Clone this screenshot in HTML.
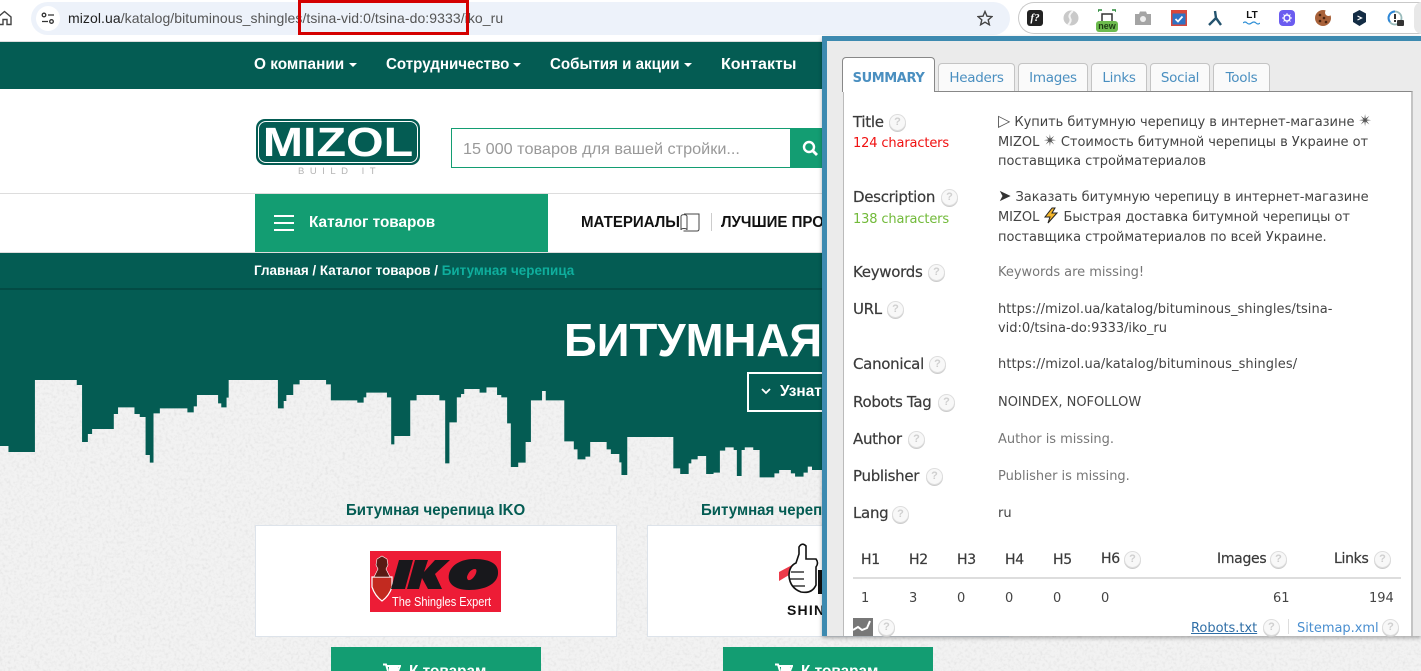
<!DOCTYPE html>
<html lang="ru"><head><meta charset="utf-8"><title>MIZOL</title>
<style>
*{box-sizing:border-box}
html,body{margin:0;padding:0;width:1421px;height:671px;overflow:hidden;background:#f2f2f2}
body{position:relative;font-family:"Liberation Sans",sans-serif}
.a{position:absolute;white-space:nowrap}
.r{position:absolute;white-space:nowrap;font-family:"Liberation Sans",sans-serif;font-weight:700;transform-origin:0 50%;transform:scaleX(.96);line-height:20px}
.p{position:absolute;white-space:nowrap;font-family:"DejaVu Sans",sans-serif;font-size:13px;line-height:20px;letter-spacing:-.03px;color:#444}
.l{font-size:15px;color:#3a3a3a;letter-spacing:-.3px;-webkit-text-stroke:.2px #3a3a3a}
.h{font-size:14px;color:#3a3a3a;letter-spacing:-.3px;-webkit-text-stroke:.2px #3a3a3a}
.m{color:#777}
.q{position:absolute;width:17px;height:17px;border-radius:50%;border:1.5px solid #dedede;background:#f8f8f8;color:#cfcfcf;font:700 11px/14px "Liberation Sans",sans-serif;text-align:center;box-shadow:0 1px 0 #ccc}
.tab{position:absolute;top:63px;height:28px;background:#fafafa;border:1px solid #c4c4c4;border-bottom:0;border-radius:4px 4px 0 0;color:#4a8fc0;font:13.5px/28px "DejaVu Sans",sans-serif;letter-spacing:-.28px;text-align:center}
.c{position:absolute;width:0;height:0;border-left:4px solid transparent;border-right:4px solid transparent;border-top:4px solid #fff;top:63px}
.st{font-size:16px;line-height:14px;color:#555}
</style></head><body>

<!-- browser bar -->
<div class="a" style="left:0;top:0;width:1421px;height:42px;background:#fff"></div>
<svg class="a" style="left:0;top:9px" width="12" height="17" viewBox="0 0 12 17"><path d="M-2 8L4.500 2.500L11 8V15.500H7V10.500H3V15.500H-2" fill="none" stroke="#444" stroke-width="1.400"/></svg>
<div class="a" style="left:31px;top:2px;width:979px;height:33px;border-radius:17px;background:#edf2fa"></div>
<div class="a" style="left:36px;top:6px;width:24px;height:25px;border-radius:50%;background:#fff"></div>
<svg class="a" style="left:41px;top:12px" width="14" height="13" viewBox="0 0 14 13"><g fill="none" stroke="#333" stroke-width="1.300"><circle cx="3" cy="3" r="1.800"/><path d="M7 3H13M1 9.500H7"/><circle cx="10.500" cy="9.500" r="1.800"/></g></svg>
<div class="a" style="left:68px;top:9px;font-size:14px;line-height:18px;color:#555;letter-spacing:.07px"><span style="color:#1f1f1f">mizol.ua</span>/katalog/bituminous_shingles/tsina-vid:0/tsina-do:9333/iko_ru</div>
<div class="a" style="left:298px;top:0;width:171px;height:35px;border:3px solid #d40000"></div>
<svg class="a" style="left:977px;top:10px" width="16" height="16" viewBox="0 0 16 16"><path d="M8 1.500L10 6.200L15 6.600L11.200 9.900L12.400 14.800L8 12.200L3.600 14.800L4.800 9.900L1 6.600L6 6.200Z" fill="none" stroke="#444" stroke-width="1.400"/></svg>
<div class="a" style="left:1018px;top:2px;width:420px;height:32px;border:1px solid #c9c9c9;border-right:0;border-radius:17px;background:#fff"></div>
<!-- extensions -->
<div class="a" style="left:1027px;top:10px;width:16px;height:16px;border-radius:3px;background:#222;color:#fff;font:italic 700 11px/16px 'Liberation Serif',serif;text-align:center">f?</div>
<svg class="a" style="left:1063px;top:10px" width="16" height="16" viewBox="0 0 16 16"><circle cx="8" cy="8" r="7.500" fill="#c9c9c9"/><path d="M10 1Q5 5 7 8T5 15" fill="none" stroke="#f4f4f4" stroke-width="2"/></svg>
<div class="a" style="left:1096px;top:21px;width:22px;height:11px;border-radius:3px;background:#6dbb4e;color:#1d3a14;font:700 9px/11px 'Liberation Sans',sans-serif;text-align:center">new</div>
<svg class="a" style="left:1098px;top:9px" width="18" height="12" viewBox="0 0 18 12"><path d="M0 3V1H4M14 1H18V3" fill="none" stroke="#2a8a3a" stroke-width="1.500"/><path d="M4 12V5H14V12" fill="none" stroke="#333" stroke-width="1.500"/></svg>
<svg class="a" style="left:1135px;top:11px" width="16" height="14" viewBox="0 0 16 14"><path d="M0 3H4L5 .5H11L12 3H16V14H0Z" fill="#a4a4a4"/><circle cx="8" cy="8" r="3" fill="#eee"/></svg>
<svg class="a" style="left:1171px;top:10px" width="16" height="16" viewBox="0 0 16 16"><rect width="16" height="16" fill="#d9473a"/><rect x="1.500" y="3.500" width="13" height="11" fill="#2f72c4"/><path d="M4.500 9L7 11.500L11.500 6.500" fill="none" stroke="#fff" stroke-width="1.800"/></svg>
<svg class="a" style="left:1208px;top:10px" width="14" height="16" viewBox="0 0 14 16"><path d="M7 1L8 8M8 8L1 15M8 8L13 15" fill="none" stroke="#24536e" stroke-width="2.400"/></svg>
<div class="a" style="left:1244px;top:10px;width:16px;font:700 10px/12px 'Liberation Sans',sans-serif;color:#111;text-align:center">LT</div>
<svg class="a" style="left:1243px;top:21px" width="17" height="4" viewBox="0 0 17 4"><path d="M0 2Q2 0 4 2T8.500 2T13 2T17 2" fill="none" stroke="#2c8ed6" stroke-width="1.200"/></svg>
<div class="a" style="left:1279px;top:10px;width:16px;height:16px;border-radius:4px;background:#6b5cf0"></div>
<svg class="a" style="left:1282px;top:13px" width="10" height="10" viewBox="0 0 10 10"><circle cx="5" cy="5" r="3" fill="none" stroke="#fff" stroke-width="1.400"/><path d="M5 0V10M0 5H10M1.500 1.500L8.500 8.500M8.500 1.500L1.500 8.500" stroke="#fff" stroke-width=".9" stroke-dasharray="1.500 7 1.500"/></svg>
<svg class="a" style="left:1315px;top:10px" width="16" height="16" viewBox="0 0 16 16"><circle cx="8" cy="8" r="8" fill="#a9623a"/><circle cx="13.500" cy="2.500" r="3.500" fill="#fff"/><circle cx="5" cy="5" r="1.300" fill="#4a2410"/><circle cx="9" cy="8" r="1.300" fill="#4a2410"/><circle cx="5" cy="11" r="1.300" fill="#4a2410"/><circle cx="11" cy="12" r="1.300" fill="#4a2410"/></svg>
<svg class="a" style="left:1353px;top:10px" width="13" height="16" viewBox="0 0 13 16"><path d="M6.500 0L13 3.500V12L6.500 16L0 12V3.500Z" fill="#132c44"/><path d="M4.500 6L8.500 8L4.500 10" fill="none" stroke="#fff" stroke-width="1.200"/></svg>
<svg class="a" style="left:1387px;top:10px" width="18" height="17" viewBox="0 0 18 17"><circle cx="8" cy="8" r="6.500" fill="none" stroke="#9bb" stroke-width="1.800"/><path d="M8 1.500A6.500 6.500 0 0 0 3 12" fill="none" stroke="#2d87d8" stroke-width="2"/><rect x="7" y="4" width="2" height="5" fill="#333"/><rect x="7" y="10" width="2" height="2" fill="#333"/><rect x="10" y="10" width="7" height="6" rx="1" fill="#333"/></svg>
<div class="a" style="left:1414px;top:2px;width:8px;height:32px;border-radius:16px 0 0 16px;background:#e8e8e8"></div>

<!-- top nav -->
<div class="a" style="left:0;top:41px;width:825px;height:48px;background:#045c53;border-top:1px solid #ddd"></div>
<div class="r" style="left:254px;top:55px;color:#fff;font-size:16px;transform:scaleX(.96)">О компании</div><div class="c" style="left:349px"></div>
<div class="r" style="left:386px;top:55px;color:#fff;font-size:16px;transform:scaleX(.945)">Сотрудничество</div><div class="c" style="left:513px"></div>
<div class="r" style="left:550px;top:55px;color:#fff;font-size:16px;transform:scaleX(.945)">События и акции</div><div class="c" style="left:684px"></div>
<div class="r" style="left:721px;top:55px;color:#fff;font-size:16px;transform:scaleX(1)">Контакты</div>

<!-- logo row -->
<div class="a" style="left:0;top:89px;width:825px;height:105px;background:#fff;border-bottom:1px solid #ddd"></div>
<div class="a" style="left:256px;top:119px;width:164px;height:46px;background:#045c53;border-radius:9px"></div>
<div class="a" style="left:258px;top:121px;width:160px;height:42px;border:1px solid #fff;border-radius:8px"></div>
<div class="a" style="left:263px;top:121px;width:150px;height:42px;font:700 41px/42px 'Liberation Sans',sans-serif;color:#fff;text-align:center;transform:scaleX(1.18)">MIZOL</div>
<div class="a" style="left:298px;top:166px;font:9.500px/12px 'Liberation Sans',sans-serif;color:#b4b4b4;letter-spacing:5.500px">BUILD IT</div>
<div class="a" style="left:451px;top:128px;width:341px;height:40px;border:1px solid #139d72;background:#fff"></div>
<div class="r" style="left:463px;top:140px;font-size:16px;font-weight:400;color:#999;transform:scaleX(1.015)">15 000 товаров для вашей стройки...</div>
<div class="a" style="left:790px;top:128px;width:35px;height:40px;background:#139d72"></div>
<svg class="a" style="left:802px;top:140px" width="18" height="17" viewBox="0 0 18 17"><circle cx="7" cy="7" r="5" fill="none" stroke="#fff" stroke-width="2.400"/><path d="M10.500 10.500L15 15" stroke="#fff" stroke-width="2.800"/></svg>

<!-- catalog row -->
<div class="a" style="left:0;top:194px;width:825px;height:59px;background:#fff"></div>
<div class="a" style="left:255px;top:194px;width:293px;height:58px;background:#139d72"></div>
<div class="a" style="left:274px;top:215px;width:20px;height:2px;background:#fff"></div>
<div class="a" style="left:274px;top:222px;width:20px;height:2px;background:#fff"></div>
<div class="a" style="left:274px;top:229px;width:20px;height:2px;background:#fff"></div>
<div class="r" style="left:309px;top:213px;color:#fff;font-size:16px;transform:scaleX(.958)">Каталог товаров</div>
<div class="r" style="left:581px;top:213px;color:#111;font-size:16px;transform:scaleX(.94)">МАТЕРИАЛЫ</div>
<svg class="a" style="left:680px;top:213px" width="21" height="20" viewBox="0 0 21 20"><path d="M1 3.500C1 1 7 1 7 3.500V17C7 15 1 15 1 17ZM4 1H19V16Q19 18 17 18H3.500" fill="none" stroke="#444" stroke-width="1"/></svg>
<div class="a" style="left:711px;top:213px;width:1px;height:18px;background:#ccc"></div>
<div class="r" style="left:721px;top:213px;color:#111;font-size:16px;transform:scaleX(.94)">ЛУЧШИЕ ПРО</div>

<!-- breadcrumb -->
<div class="a" style="left:0;top:252px;width:825px;height:38px;background:#045c53;border-top:1px solid #ddd;border-bottom:2px solid #034b44"></div>
<div class="r" style="left:254px;top:260px;color:#fff;font-size:14px;transform:scaleX(.96)">Главная / Каталог товаров / <span style="color:#0fae9d">Битумная черепица</span></div>

<!-- hero -->
<div class="a" style="left:0;top:290px;width:825px;height:210px;background:#045c53"></div>
<svg class="a" style="left:0;top:290px" width="1421" height="381" viewBox="0 0 1421 381">
<filter id="n" x="0" y="0" width="100%" height="100%" filterUnits="objectBoundingBox"><feTurbulence type="fractalNoise" baseFrequency=".35" numOctaves="2" seed="4"/><feColorMatrix values="0 0 0 0 .55 0 0 0 0 .55 0 0 0 0 .55 .5 .5 0 0 -.47"/><feComposite in2="SourceAlpha" operator="in" result="t"/><feMerge><feMergeNode in="SourceGraphic"/><feMergeNode in="t"/></feMerge></filter>
<g filter="url(#n)"><rect x="0" y="205" width="1421" height="176" fill="#f2f2f2"/><path fill="#f2f2f2" transform="scale(.52934 .33333)" d="M0 468H16V486H66V270H145V285H155V456H166V432H174V417H215V372H223V352H254V372H264V381H275V495H283V518H290V370H302V355H354V367H366V349H372V315H412V340H418V352H428V323H432V270H525V355H536V333H541V315H554V283H566V270H616V283H625V331H675V338H687V322H692V308H731V322H739V463H745V438H775V331H787V315H830V331H841V520H849V397H863V322H871V312H877V297H906V308H919V292H939V315H947V322H958V400H965V531H979V518H993V456H1003V331H1024V303H1031V331H1066V454H1084V478H1091V508H1106V500H1115V456H1146V478H1154V492H1170V517H1174V555H1185V441H1272V535H1285V552H1301V520H1306V508H1318V498H1334V552H1348V548H1360V482H1370V472H1386V480H1392V558H1401V480H1407V472H1423V480H1435V562H1463V550H1472V540H1494V550H1502V560H1518V548H1526V530H1534V540H1568V630H0Z"/></g></svg>
<div class="r" style="left:564px;top:319px;color:#fff;font-size:46px;line-height:42px;transform:scaleX(.99)">БИТУМНАЯ</div>
<div class="a" style="left:747px;top:372px;width:80px;height:40px;border:2px solid #fff"></div>
<svg class="a" style="left:761px;top:388px" width="10" height="7" viewBox="0 0 10 7"><path d="M1 1L5 5L9 1" fill="none" stroke="#fff" stroke-width="1.800"/></svg>
<div class="r" style="left:780px;top:382px;color:#fff;font-size:16px;transform:scaleX(.96)">Узнат</div>

<!-- cards -->
<div class="r" style="left:346px;top:501px;color:#045c53;font-size:16px;transform:scaleX(.94)">Битумная черепица IKO</div>
<div class="a" style="left:255px;top:525px;width:362px;height:112px;background:#fff;border:1px solid #dde3ea"></div>
<svg class="a" style="left:369px;top:551px" width="133" height="61" viewBox="0 0 133 61"><rect x="1" width="131" height="61" fill="#ed1c36"/><path d="M3 26H23V36Q20 45 13 50Q6 45 3 36Z" fill="#c22a20" stroke="#fff" stroke-width="1.200"/><path d="M13 5L18 8L19 14L17 18L21 26H5L9 18L7 14L8 8Z" fill="#5a1a14" stroke="#fff" stroke-width=".6"/><path d="M30 9H44L36 38H22ZM46 9H59L55 21L66 9H81L66 23L73 38H59L53 27L50 38H38ZM105 8C123 8 130 14 129 23C128 33 116 39 100 39C85 39 78 32 80 23C82 14 92 8 105 8ZM106 18C102 18 99 22 98 26C98 30 101 30 104 27C107 24 109 18 106 18Z" fill="#18181c" fill-rule="evenodd"/></svg>
<div class="a" style="left:392px;top:594px;color:#fff;font:12.500px/16px 'Liberation Sans',sans-serif;transform-origin:0 50%;transform:scaleX(.88)">The Shingles Expert</div>
<div class="a" style="left:331px;top:647px;width:210px;height:24px;background:#139d72"></div>
<div class="r" style="left:409px;top:663px;color:#fff;font-size:16px;line-height:18px">К товарам</div>
<svg class="a" style="left:383px;top:663px" width="18" height="8" viewBox="0 0 18 8"><path d="M0 1.500H3L5 8M3.500 3H17L15 8" fill="none" stroke="#fff" stroke-width="2"/><rect x="6" y="4" width="9" height="4" fill="#fff"/></svg>

<div class="r" style="left:701px;top:501px;color:#045c53;font-size:16px;transform:scaleX(.94)">Битумная черепица</div>
<div class="a" style="left:647px;top:525px;width:362px;height:112px;background:#fff;border:1px solid #dde3ea"></div>
<svg class="a" style="left:778px;top:542px" width="46" height="66" viewBox="0 0 46 66"><path d="M1 30L16 22V30L1 39Z" fill="#ed3a4a"/><path d="M18 21L21 12V5Q24 0 28 4V17H38Q41 21 38 25V43Q34 52 23 50Q12 46 11 34Q11 24 18 21Z" fill="#fff" stroke="#111" stroke-width="1.600"/><path d="M13 30H26M12 37H26M15 44H27" stroke="#111" stroke-width="1.300"/><rect x="40" y="28" width="6" height="24" fill="#111"/></svg>
<div class="a" style="left:787px;top:601px;font:700 14px/18px 'Liberation Sans',sans-serif;color:#111;letter-spacing:1.200px">SHIN</div>
<div class="a" style="left:723px;top:647px;width:210px;height:24px;background:#139d72"></div>
<div class="r" style="left:801px;top:663px;color:#fff;font-size:16px;line-height:18px">К товарам</div>
<svg class="a" style="left:775px;top:663px" width="18" height="8" viewBox="0 0 18 8"><path d="M0 1.500H3L5 8M3.500 3H17L15 8" fill="none" stroke="#fff" stroke-width="2"/><rect x="6" y="4" width="9" height="4" fill="#fff"/></svg>

<!-- SEO panel -->
<div class="a" style="left:822px;top:36px;width:599px;height:600px;background:#ebebeb;border-top:5px solid #3d8ab0;border-left:5px solid #3d8ab0;box-shadow:0 2px 4px rgba(0,0,0,.3)"></div>
<div class="a" style="left:843px;top:91px;width:570px;height:545px;background:#fff;border-top:1px solid #888;border-left:1px solid #bbb;border-right:2px solid #c4c4c4"></div>
<div class="a" style="left:842px;top:57px;width:93px;height:35px;background:#fff;border:1px solid #888;border-bottom:0;border-radius:4px 4px 0 0;color:#4a8fc0;font:700 13px/41px 'DejaVu Sans',sans-serif;letter-spacing:-.4px;text-align:center">SUMMARY</div>
<div class="tab" style="left:938px;width:77px">Headers</div>
<div class="tab" style="left:1018px;width:70px">Images</div>
<div class="tab" style="left:1091px;width:56px">Links</div>
<div class="tab" style="left:1150px;width:60px">Social</div>
<div class="tab" style="left:1213px;width:57px">Tools</div>

<div class="p l" style="left:853px;top:112px">Title</div><div class="q" style="left:889px;top:114px">?</div>
<div class="p" style="left:853px;top:134px;color:#f01010;letter-spacing:-.14px">124 characters</div>
<div class="p" style="left:998px;top:113px"><span class="st">▷</span> Купить битумную черепицу в интернет-магазине <span class="st">✴</span></div>
<div class="p" style="left:998px;top:133px">MIZOL <span class="st">✴</span> Стоимость битумной черепицы в Украине от</div>
<div class="p" style="left:998px;top:152px">поставщика стройматериалов</div>

<div class="p l" style="left:853px;top:187px">Description</div><div class="q" style="left:941px;top:189px">?</div>
<div class="p" style="left:853px;top:210px;color:#72ba3a;letter-spacing:-.14px">138 characters</div>
<div class="p" style="left:998px;top:188px"><span class="st" style="color:#333">➤</span> Заказать битумную черепицу в интернет-магазине</div>
<div class="p" style="left:998px;top:207px">MIZOL <svg width="16" height="17" viewBox="0 0 16 17" style="vertical-align:-3px"><path d="M9 1L2 10H7L5 16L14 6H9L12 1Z" fill="#f4b62c" stroke="#222" stroke-width="1"/></svg> Быстрая доставка битумной черепицы от</div>
<div class="p" style="left:998px;top:228px">поставщика стройматериалов по всей Украине.</div>

<div class="p l" style="left:853px;top:262px">Keywords</div><div class="q" style="left:928px;top:264px">?</div>
<div class="p m" style="left:998px;top:263px">Keywords are missing!</div>
<div class="p l" style="left:853px;top:299px">URL</div><div class="q" style="left:887px;top:301px">?</div>
<div class="p" style="left:998px;top:300px;letter-spacing:.05px">https://mizol.ua/katalog/bituminous_shingles/tsina-</div>
<div class="p" style="left:998px;top:319px">vid:0/tsina-do:9333/iko_ru</div>
<div class="p l" style="left:853px;top:354px">Canonical</div><div class="q" style="left:929px;top:356px">?</div>
<div class="p" style="left:998px;top:355px;letter-spacing:.08px">https://mizol.ua/katalog/bituminous_shingles/</div>
<div class="p l" style="left:853px;top:392px">Robots Tag</div><div class="q" style="left:938px;top:394px">?</div>
<div class="p" style="left:998px;top:393px">NOINDEX, NOFOLLOW</div>
<div class="p l" style="left:853px;top:429px">Author</div><div class="q" style="left:908px;top:431px">?</div>
<div class="p m" style="left:998px;top:430px">Author is missing.</div>
<div class="p l" style="left:853px;top:466px">Publisher</div><div class="q" style="left:926px;top:468px">?</div>
<div class="p m" style="left:998px;top:467px">Publisher is missing.</div>
<div class="p l" style="left:853px;top:503px">Lang</div><div class="q" style="left:892px;top:506px">?</div>
<div class="p" style="left:998px;top:504px">ru</div>

<div class="p h" style="left:861px;top:550px">H1</div>
<div class="p h" style="left:909px;top:550px">H2</div>
<div class="p h" style="left:957px;top:550px">H3</div>
<div class="p h" style="left:1005px;top:550px">H4</div>
<div class="p h" style="left:1053px;top:550px">H5</div>
<div class="p h" style="left:1101px;top:549px">H6</div><div class="q" style="left:1124px;top:551px">?</div>
<div class="p h" style="left:1217px;top:549px">Images</div><div class="q" style="left:1270px;top:551px">?</div>
<div class="p h" style="left:1334px;top:549px">Links</div><div class="q" style="left:1374px;top:551px">?</div>
<div class="a" style="left:853px;top:577px;width:548px;height:2px;background:#ddd"></div>
<div class="p" style="left:861px;top:589px">1</div>
<div class="p" style="left:909px;top:589px">3</div>
<div class="p" style="left:957px;top:589px">0</div>
<div class="p" style="left:1005px;top:589px">0</div>
<div class="p" style="left:1053px;top:589px">0</div>
<div class="p" style="left:1101px;top:589px">0</div>
<div class="p" style="left:1273px;top:589px">61</div>
<div class="p" style="left:1369px;top:589px">194</div>
<svg class="a" style="left:853px;top:618px" width="20" height="18" viewBox="0 0 20 18"><rect width="20" height="18" fill="#777"/><path d="M0 12L5 9L9 12L14 10L17 3" fill="none" stroke="#fff" stroke-width="2"/></svg>
<div class="q" style="left:878px;top:619px">?</div>
<div class="p" style="left:1191px;top:619px;color:#2f6ea6;text-decoration:underline">Robots.txt</div><div class="q" style="left:1263px;top:619px">?</div>
<div class="a" style="left:1288px;top:619px;width:1px;height:15px;background:#ddd"></div>
<div class="p" style="left:1297px;top:619px;color:#4a8fd0">Sitemap.xml</div><div class="q" style="left:1382px;top:619px">?</div>
</body></html>
